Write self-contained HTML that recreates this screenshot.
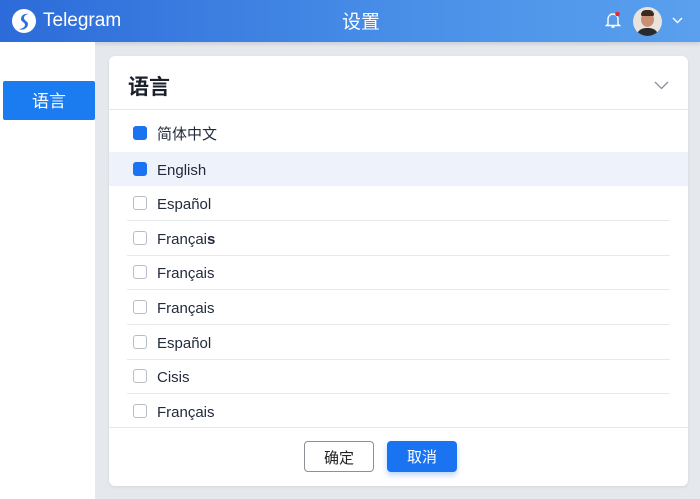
<!DOCTYPE html>
<html><head><meta charset="utf-8"><style>
*{margin:0;padding:0;box-sizing:border-box}
body{width:700px;height:499px;overflow:hidden;background:#e5e8ed;font-family:"Liberation Sans","Noto Sans CJK SC",sans-serif;position:relative}
.hdr{position:absolute;left:0;top:0;width:700px;height:42px;background:linear-gradient(90deg,#2c6bd9,#4a90e8 60%,#5aa0ee);color:#fff;box-shadow:0 2px 4px rgba(0,0,0,.12)}
.side{position:absolute;left:0;top:42px;width:95px;height:457px;background:#fff}
.act{position:absolute;left:3px;top:81px;width:92px;height:39px;background:#1b7bf0;color:#fff;font-size:17px;text-align:center;line-height:41px;border-radius:2px}
.card{position:absolute;left:109px;top:56px;width:579px;height:430px;background:#fff;border-radius:6px;box-shadow:0 1px 3px rgba(0,0,0,.08)}
.row{position:absolute;left:0;width:579px;height:34px;font-size:15px;color:#222b3c;line-height:34px}
.row .cb{position:absolute;left:24px;top:10px;width:14px;height:14px;border:1px solid #b8bcc4;border-radius:3px;background:#fff}
.row .cb.on{background:#1a73f0;border-color:#1a73f0}
.row span{position:absolute;left:48px;top:2px}
.sep{position:absolute;left:18px;width:543px;height:1px;background:#e6e9ee}
.btn{position:absolute;top:385px;width:70px;height:31px;border-radius:4px;font-size:15px;text-align:center;line-height:31px}
</style></head><body>
<div class="hdr">
<svg style="position:absolute;left:11px;top:8px" width="26" height="26" viewBox="0 0 26 26"><circle cx="13" cy="13" r="12" fill="#fff"/><path d="M18 6c-4-1-8 1-8 5 0 3 4 3 4 6 0 2-3 4-6 4 4 2 9-1 9-5 0-3-4-3-4-6 0-2 2-4 5-4z" fill="#2e6fdb"/></svg>
<div style="position:absolute;left:43px;top:10px;font-size:19px">Telegram</div>
<div style="position:absolute;left:342px;top:7px;font-size:19px">设置</div>
<svg style="position:absolute;left:605px;top:11px" width="16" height="18" viewBox="0 0 16 18"><path d="M3 13V8a5 5 0 0 1 10 0v5l1.5 1.5h-13z M6.5 16h3" fill="none" stroke="#fff" stroke-width="1.4"/><circle cx="12.5" cy="3" r="2.3" fill="#e8283a"/></svg>
<div style="position:absolute;left:633px;top:7px;width:29px;height:29px;border-radius:50%;background:#e9e3de;overflow:hidden"><div style="position:absolute;left:8px;top:5px;width:13px;height:15px;border-radius:50%;background:#c98f74"></div><div style="position:absolute;left:8px;top:3px;width:13px;height:6px;border-radius:6px 6px 2px 2px;background:#3a2a22"></div><div style="position:absolute;left:3px;top:21px;width:23px;height:12px;border-radius:10px 10px 0 0;background:#2a2a2e"></div></div>
<svg style="position:absolute;left:672px;top:17px" width="11" height="7"><path d="M1 1l4.5 4.5L10 1" fill="none" stroke="#fff" stroke-width="1.4"/></svg>
</div>
<div class="side"></div>
<div class="act">语言</div>
<div class="card">
<div style="position:absolute;left:19px;top:15px;font-size:21px;font-weight:bold;color:#1a1f2b">语言</div>
<svg style="position:absolute;left:545px;top:25px" width="15" height="9"><path d="M1 1l6.5 6.5L14 1" fill="none" stroke="#8a8f98" stroke-width="1.3"/></svg>
<div style="position:absolute;left:0;top:53px;width:579px;height:1px;background:#e3e6eb"></div>
<div class="row" style="top:60px"><div class="cb on"></div><span>简体中文</span></div>
<div class="row" style="top:96px;background:#eef3fb"><div class="cb on"></div><span>English</span></div>
<div class="row" style="top:130px"><div class="cb"></div><span>Español</span></div>
<div class="sep" style="top:164px"></div>
<div class="row" style="top:165px"><div class="cb"></div><span>Françai<b>s</b></span></div>
<div class="sep" style="top:199px"></div>
<div class="row" style="top:199px"><div class="cb"></div><span>Français</span></div>
<div class="sep" style="top:233px"></div>
<div class="row" style="top:234px"><div class="cb"></div><span>Français</span></div>
<div class="sep" style="top:268px"></div>
<div class="row" style="top:269px"><div class="cb"></div><span>Español</span></div>
<div class="sep" style="top:303px"></div>
<div class="row" style="top:303px"><div class="cb"></div><span>Cisis</span></div>
<div class="sep" style="top:337px"></div>
<div class="row" style="top:338px"><div class="cb"></div><span>Français</span></div>
<div style="position:absolute;left:0;top:371px;width:579px;height:1px;background:#e3e6eb"></div>
<div class="btn" style="left:195px;border:1px solid #8c9098;color:#222;background:#fff;line-height:29px;padding-top:2px">确定</div>
<div class="btn" style="left:278px;background:#1a73f0;color:#fff;box-shadow:0 3px 6px rgba(26,115,240,.3);padding-top:1px">取消</div>
</div>
</body></html>
